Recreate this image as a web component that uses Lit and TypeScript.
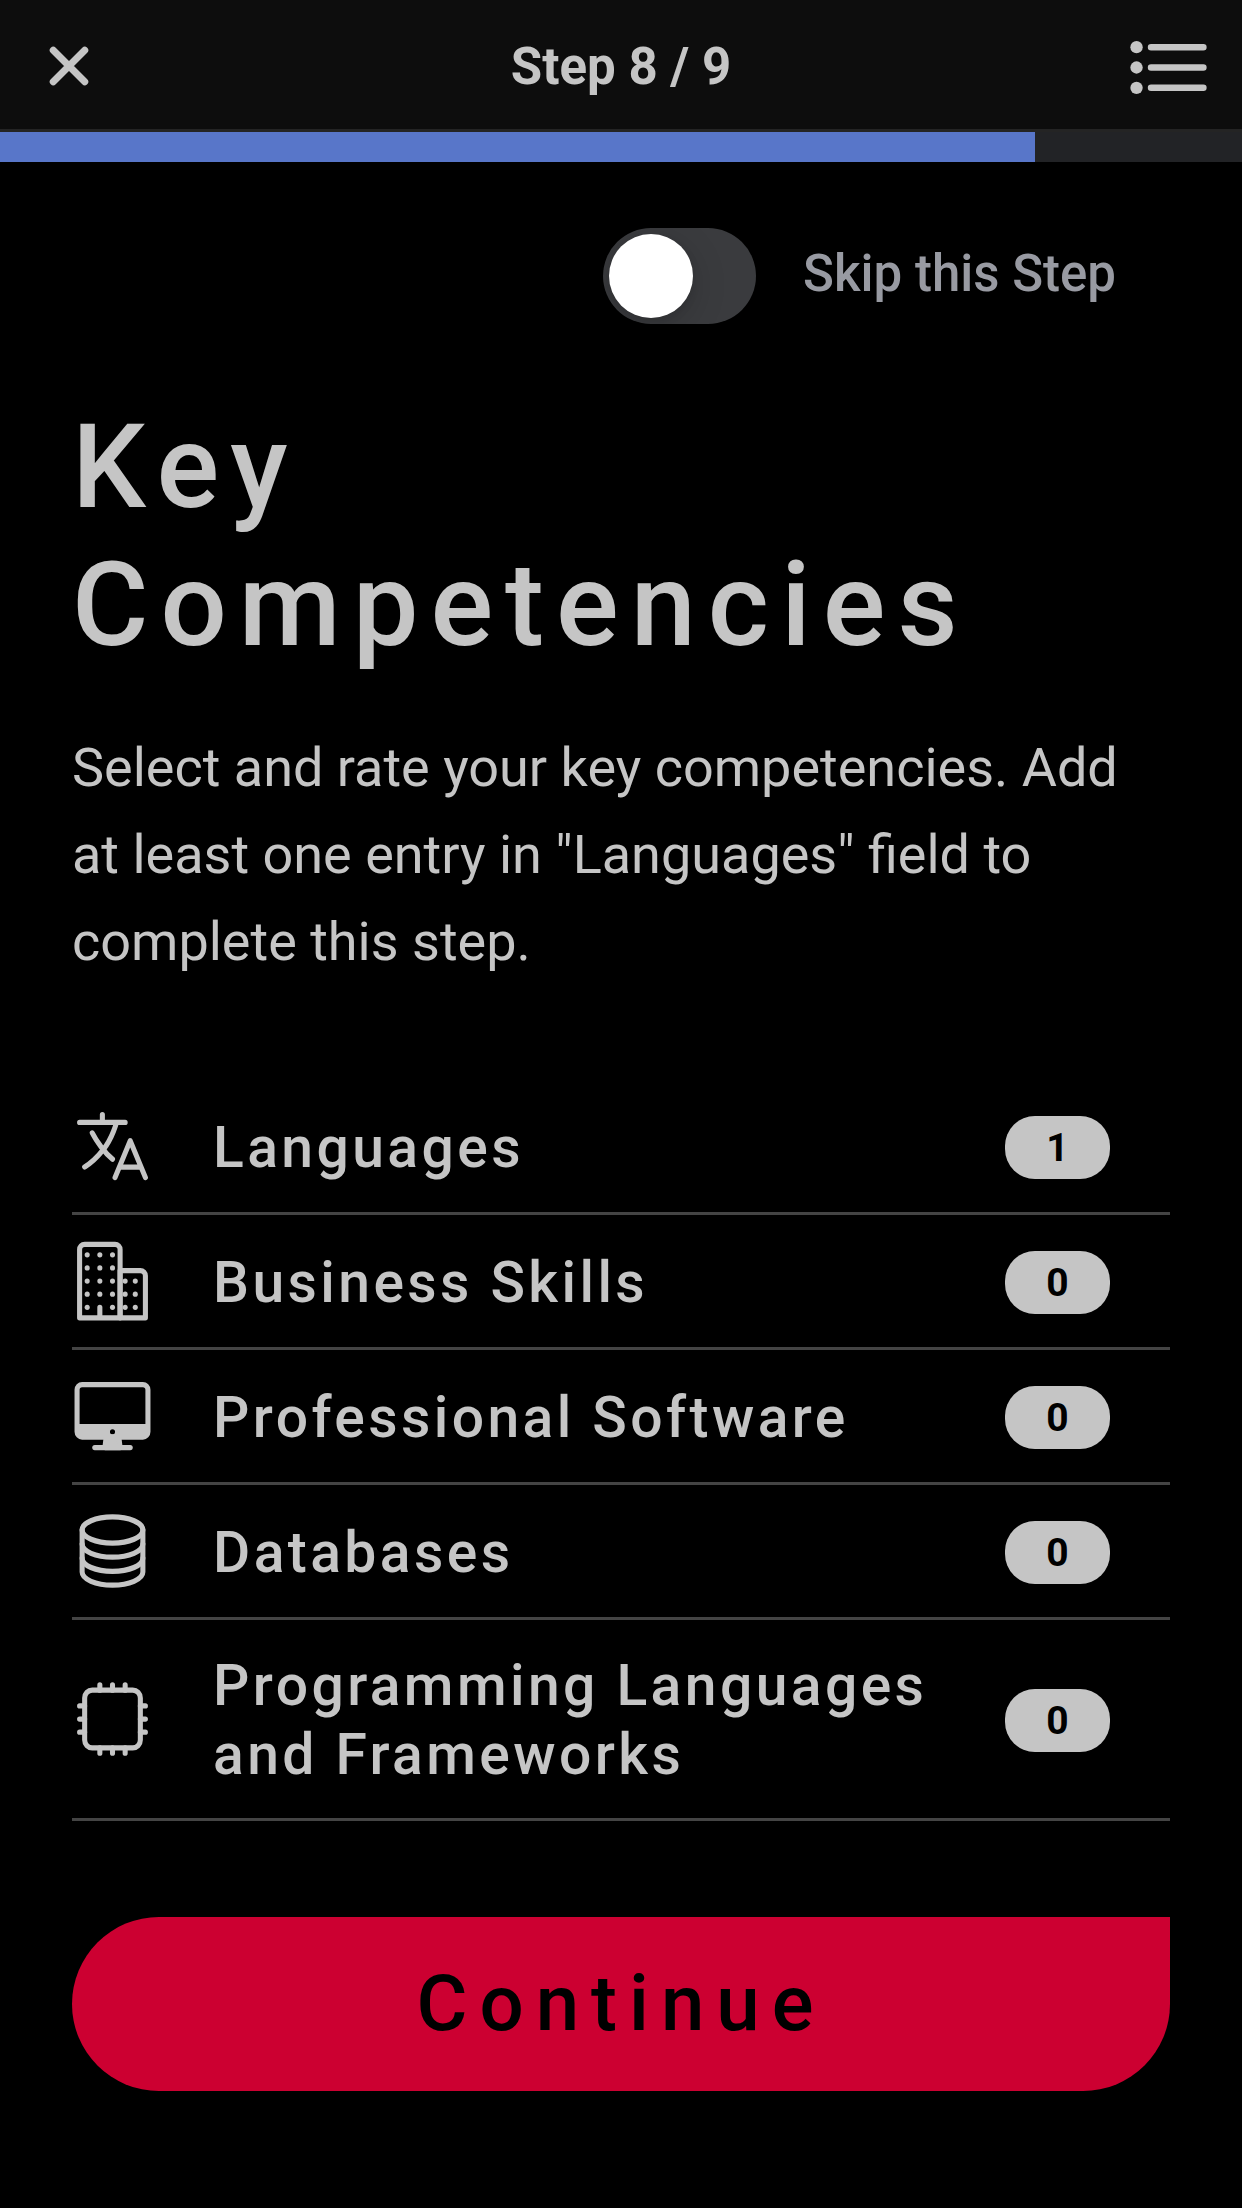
import { LitElement, html, css, svg } from "lit";
import { customElement, property, state } from "lit/decorators.js";

type IconName = "close" | "list" | "language" | "business" | "desktop" | "server" | "chip";

const businessDots = [
  [96, 96], [176, 96], [256, 96],
  [96, 176], [176, 176], [256, 176],
  [96, 256], [176, 256], [256, 256], [336, 256], [400, 256],
  [96, 336], [176, 336], [256, 336], [336, 336], [400, 336],
  [96, 416], [256, 416], [336, 416], [400, 416],
];

const shapes: Record<IconName, unknown> = {
  close: svg`<path class="heavy" d="M368 368L144 144M368 144L144 368" />`,
  list: svg`
    <path class="medium" d="M160 144h288M160 256h288M160 368h288" />
    <circle class="solid" cx="80" cy="144" r="34" />
    <circle class="solid" cx="80" cy="256" r="34" />
    <circle class="solid" cx="80" cy="368" r="34" />`,
  language: svg`
    <path d="M48 112h288M192 64v48M272 448l96-224 96 224M301.5 384h133M281.3 112S257 206 199 277 80 384 80 384" />
    <path d="M256 336s-35-27-72-75-56-85-56-85" />`,
  business: svg`
    <path d="M176 416v64M80 32h192a32 32 0 0132 32v416H48V64a32 32 0 0132-32z" />
    <path d="M304 192h128a32 32 0 0132 32v256H304z" />
    ${businessDots.map(([x, y]) => svg`<circle class="solid" cx=${x} cy=${y} r="16" />`)}`,
  desktop: svg`
    <rect x="32" y="64" width="448" height="320" rx="32" ry="32" />
    <path class="filled" d="M304 448l-8-64h-80l-8 64h96z" />
    <path d="M368 448H144" />
    <path class="solid" d="M32 304v48a32 32 0 0032 32h384a32 32 0 0032-32v-48zm224 64a16 16 0 1116-16 16 16 0 01-16 16z" />`,
  server: svg`
    <ellipse cx="256" cy="128" rx="192" ry="80" />
    <path d="M448 214c0 44.18-86 80-192 80S64 258.18 64 214" />
    <path d="M448 300c0 44.18-86 80-192 80S64 344.18 64 300" />
    <path d="M64 127.24v257.52C64 428.52 150 464 256 464s192-35.48 192-79.24V127.24" />`,
  chip: svg`
    <rect x="80" y="80" width="352" height="352" rx="48" ry="48" />
    <path d="M256 80V48M336 80V48M176 80V48M256 464v-32M336 464v-32M176 464v-32M432 256h32M432 336h32M432 176h32M48 256h32M48 336h32M48 176h32" />`,
};

@customElement("app-icon")
export class AppIcon extends LitElement {
  @property() name: IconName = "close";

  static styles = css`
    :host {
      display: block;
    }
    .glyph {
      display: block;
      width: 100%;
      height: 100%;
      fill: none;
      stroke: currentColor;
      stroke-width: 32;
      stroke-linecap: round;
      stroke-linejoin: round;
    }
    .medium {
      stroke-width: 36;
    }
    .heavy {
      stroke-width: 50;
    }
    .solid {
      fill: currentColor;
      stroke: none;
    }
    .filled {
      fill: currentColor;
    }
  `;

  render() {
    return html`<svg class="glyph" viewBox="0 0 512 512" preserveAspectRatio="none" aria-hidden="true">
      ${shapes[this.name]}
    </svg>`;
  }
}

interface Competency {
  label: string;
  icon: IconName;
  count: number;
}

@customElement("app-root")
export class AppRoot extends LitElement {
  @state() private skipped = false;

  private readonly progress = 5 / 6;

  private readonly competencies: Competency[] = [
    { label: "Languages", icon: "language", count: 1 },
    { label: "Business Skills", icon: "business", count: 0 },
    { label: "Professional Software", icon: "desktop", count: 0 },
    { label: "Databases", icon: "server", count: 0 },
    { label: "Programming Languages and Frameworks", icon: "chip", count: 0 },
  ];

  static styles = css`
    :host {
      display: block;
      min-height: 100vh;
      background: #000;
      color: #c5c5c5;
      font-family: Roboto, "Liberation Sans", sans-serif;
    }
    * {
      box-sizing: border-box;
    }
    button {
      margin: 0;
      padding: 0;
      border: 0;
      background: none;
      color: inherit;
      font: inherit;
      cursor: pointer;
    }
    .bar {
      display: grid;
      grid-template-columns: 1fr auto 1fr;
      align-items: center;
      min-height: 132px;
      padding: 3px 27px 0;
      border-bottom: 3px solid #242424;
      background: #0d0d0d;
    }
    .bar-title {
      margin: 0;
      padding-top: 2px;
      font-size: 51px;
      line-height: 60px;
      font-weight: 700;
    }
    .close {
      justify-self: start;
      padding: 6px;
    }
    .close-icon {
      width: 72px;
      height: 72px;
    }
    .menu {
      justify-self: end;
      padding-top: 3px;
    }
    .menu-icon {
      width: 93px;
      height: 93px;
    }
    .track {
      height: 30px;
      background: #222326;
    }
    .fill {
      height: 100%;
      background: #5876c9;
    }
    .content {
      padding: 66px 72px 72px;
    }
    .skip {
      display: flex;
      align-items: center;
      justify-content: flex-end;
      gap: 47px;
      padding-right: 54px;
    }
    .toggle {
      appearance: none;
      width: 153px;
      height: 96px;
      margin: 0;
      padding: 6px;
      border-radius: 48px;
      background: #3a3b3e;
      cursor: pointer;
    }
    .toggle::before {
      content: "";
      display: block;
      width: 84px;
      height: 84px;
      border-radius: 50%;
      background: #fff;
      box-shadow: 0 9px 36px rgba(0, 0, 0, 0.16), 0 3px 9px rgba(0, 0, 0, 0.1);
    }
    .toggle:checked {
      background: #5876c9;
    }
    .toggle:checked::before {
      margin-left: auto;
    }
    .skip-label {
      padding-bottom: 4px;
      color: #989aa2;
      font-size: 51px;
      line-height: 60px;
      font-weight: 500;
    }
    .heading {
      margin: 74px 0 50px;
      font-size: 117px;
      line-height: 138px;
      font-weight: 500;
      letter-spacing: 12px;
    }
    .intro {
      margin: 0 0 95px;
      font-size: 54px;
      line-height: 87px;
    }
    .list {
      margin: 0 0 96px;
      padding: 0;
      list-style: none;
    }
    .item {
      border-bottom: 3px solid #444;
    }
    .row {
      display: flex;
      align-items: center;
      gap: 60px;
      width: 100%;
      min-height: 132px;
      padding: 24px 60px 24px 0;
      text-align: left;
    }
    .item:last-child .row {
      padding-top: 29px;
      padding-bottom: 29px;
    }
    .row-icon {
      flex: none;
      width: 81px;
      height: 84px;
    }
    .row-label {
      flex: 1;
      padding-top: 2px;
      font-size: 57px;
      line-height: 69px;
      font-weight: 500;
      letter-spacing: 0.06em;
    }
    .count {
      flex: none;
      width: 105px;
      margin-top: 3px;
      padding-top: 1px;
      border-radius: 30px;
      background: #c5c5c5;
      color: #000;
      font-size: 39px;
      line-height: 62px;
      font-weight: 700;
      text-align: center;
    }
    .continue {
      display: block;
      width: 100%;
      padding: 40px 0;
      border-radius: 87px 0 87px 87px;
      background: #cc0031;
      color: #000;
      font-size: 78px;
      line-height: 94px;
      font-weight: 500;
      letter-spacing: 12px;
    }
  `;

  private onSkip(event: Event) {
    this.skipped = (event.target as HTMLInputElement).checked;
  }

  render() {
    const percent = this.progress * 100;
    return html`
      <header class="bar">
        <button class="close" type="button" aria-label="Close">
          <app-icon class="close-icon" name="close"></app-icon>
        </button>
        <p class="bar-title">Step 8 / 9</p>
        <button class="menu" type="button" aria-label="All steps">
          <app-icon class="menu-icon" name="list"></app-icon>
        </button>
      </header>
      <div class="track" role="progressbar" aria-label="Progress" aria-valuenow=${Math.round(percent)}>
        <div class="fill" style="width: ${percent}%"></div>
      </div>
      <main class="content">
        <div class="skip">
          <input
            id="skip"
            class="toggle"
            type="checkbox"
            role="switch"
            .checked=${this.skipped}
            @change=${this.onSkip}
          />
          <label class="skip-label" for="skip">Skip this Step</label>
        </div>
        <h1 class="heading">Key Competencies</h1>
        <p class="intro">
          Select and rate your key competencies. Add at least one entry in "Languages" field to complete this step.
        </p>
        <ul class="list">
          ${this.competencies.map(
            (entry) => html`
              <li class="item">
                <button class="row" type="button">
                  <app-icon class="row-icon" name=${entry.icon}></app-icon>
                  <span class="row-label">${entry.label}</span>
                  <span class="count">${entry.count}</span>
                </button>
              </li>
            `,
          )}
        </ul>
        <button class="continue" type="button">Continue</button>
      </main>
    `;
  }
}
